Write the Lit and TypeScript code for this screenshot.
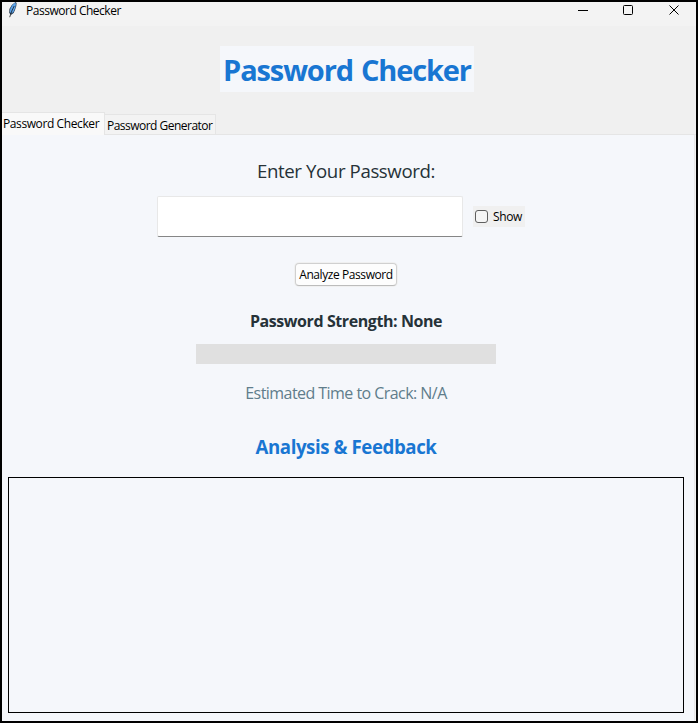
import { LitElement, html, css } from "lit";
import { customElement, state } from "lit/decorators.js";

@customElement("app-root")
export class AppRoot extends LitElement {
  @state() private shown = false;

  static styles = css`
    :host {
      display: block;
      font-family: "Open Sans", "Noto Sans", sans-serif;
      color: #000;
    }
    * {
      box-sizing: border-box;
    }
    .window {
      width: 698px;
      height: 723px;
      border: 2px solid #000;
      background: #f0f0f0;
      display: flex;
      flex-direction: column;
      overflow: hidden;
      white-space: nowrap;
    }
    .titlebar {
      height: 24px;
      flex: none;
      background: #f3f3f3;
      display: flex;
      align-items: flex-start;
      padding-left: 5px;
    }
    .feather {
      display: block;
      width: 13px;
      height: 18px;
      margin-right: 6px;
    }
    .caption {
      font-size: 12px;
      line-height: 18px;
      letter-spacing: -0.48px;
      flex: 1;
    }
    .controls {
      display: block;
      width: 118px;
      height: 18px;
    }
    .banner {
      height: 86px;
      flex: none;
      display: flex;
      justify-content: center;
      padding: 20px 4px 20px 0;
    }
    .title {
      margin: 0;
      width: 254px;
      height: 46px;
      background: #f5f7fb;
      color: #1976d2;
      font-size: 29px;
      font-weight: 700;
      line-height: 48px;
      text-align: center;
      letter-spacing: -1.12px;
      word-spacing: 1.5px;
    }
    .tabs {
      height: 23px;
      flex: none;
      display: flex;
      align-items: flex-end;
      border-bottom: 1px solid #e5e5e5;
      font-size: 12px;
    }
    .tab {
      border: 1px solid #e5e5e5;
      border-left: 0;
      border-bottom: 0;
      height: 20px;
      line-height: 22px;
      width: 111px;
      padding-left: 2px;
      background: #f3f3f3;
      letter-spacing: -0.52px;
    }
    .tab.active {
      height: 23px;
      line-height: 22px;
      width: 103px;
      padding-left: 1px;
      margin-bottom: -1px;
      background: #f9f9f9;
      letter-spacing: -0.4px;
    }
    .page {
      flex: 1;
      margin-right: 1px;
      border-right: 1px solid #e8e8e8;
      background: #f5f7fb;
      display: flex;
      flex-direction: column;
      align-items: center;
      padding: 23px 10px 8px 6px;
    }
    .prompt {
      height: 26px;
      line-height: 26px;
      font-size: 18.67px;
      color: #263238;
      letter-spacing: -0.4px;
    }
    .entry {
      display: flex;
      align-items: center;
      margin-top: 12px;
      margin-right: 10px;
      gap: 10px;
    }
    .field {
      width: 306px;
      height: 41px;
      border: 1px solid #e8e8e8;
      border-bottom-color: #868686;
      border-radius: 2px;
      background: #fff;
      padding: 0 6px;
      outline: none;
      font: inherit;
    }
    .show {
      width: 52px;
      height: 21px;
      background: #f0f0f0;
      display: flex;
      align-items: center;
      padding-left: 2px;
      gap: 5px;
      font-size: 12px;
      letter-spacing: -0.35px;
    }
    .box {
      appearance: none;
      margin: 0;
      width: 13px;
      height: 13px;
      border: 1px solid #5f5f5f;
      border-radius: 3px;
      background: #f5f5f5;
    }
    .analyze {
      margin-top: 26px;
      width: 102px;
      height: 23px;
      border: 1px solid #d0d0d0;
      border-bottom-color: #bcbcbc;
      border-radius: 4px;
      background: #fdfdfd;
      box-shadow: 0 0 0 1px #f0f0f0;
      color: #000;
      padding: 0;
      font: 12px/21px "Open Sans", "Noto Sans", sans-serif;
      letter-spacing: -0.42px;
    }
    .strength {
      margin-top: 24px;
      height: 22px;
      line-height: 23px;
      font-size: 16px;
      font-weight: 700;
      color: #263238;
      letter-spacing: -0.42px;
    }
    .meter {
      margin-top: 12px;
      width: 300px;
      height: 20px;
      background: #e0e0e0;
    }
    .crack {
      margin-top: 18px;
      height: 22px;
      line-height: 23px;
      font-size: 16px;
      color: #607d8b;
      letter-spacing: -0.55px;
    }
    .heading {
      margin: 30px 0 0;
      height: 26px;
      line-height: 26px;
      font-size: 18.67px;
      font-weight: 700;
      color: #1976d2;
      letter-spacing: -0.42px;
    }
    .feedback {
      margin-top: 17px;
      width: 676px;
      flex: 1;
      border: 1px solid #000;
    }
  `;

  render() {
    return html`
      <div class="window">
        <header class="titlebar">
          <svg class="feather" viewBox="0 0 13 18">
            <path d="M8.6 0 L9.6 1 L9.3 4 L8 8 L6.6 11 L4.2 12.8 L2.2 11 L2.4 7 L4.8 3 Z" fill="#24364c" />
            <path d="M8 0.6 L9 1.8 L8.2 6 L6.6 9.8 L4.6 11.6 L2.9 10.2 L3.2 7 L5.2 3.2 Z" fill="#5ba3ea" />
            <path d="M7.2 4 L4.8 9 L2.7 15.2" fill="none" stroke="#16191d" stroke-width="0.8" />
          </svg>
          <span class="caption">Password Checker</span>
          <svg class="controls" viewBox="0 0 118 18" fill="none" stroke="#000">
            <path d="M0 8.5H10" />
            <rect x="45.5" y="3.5" width="9" height="9" rx="1" />
            <path d="M91.5 3.5L100.5 12.5M100.5 3.5L91.5 12.5" />
          </svg>
        </header>
        <div class="banner"><h1 class="title">Password Checker</h1></div>
        <nav class="tabs">
          <div class="tab active">Password Checker</div>
          <div class="tab">Password Generator</div>
        </nav>
        <main class="page">
          <div class="prompt">Enter Your Password:</div>
          <div class="entry">
            <input class="field" type=${this.shown ? "text" : "password"} />
            <label class="show">
              <input
                class="box"
                type="checkbox"
                .checked=${this.shown}
                @change=${() => (this.shown = !this.shown)}
              /><span>Show</span>
            </label>
          </div>
          <button class="analyze">Analyze Password</button>
          <div class="strength">Password Strength: None</div>
          <div class="meter"></div>
          <div class="crack">Estimated Time to Crack: N/A</div>
          <h2 class="heading">Analysis &amp; Feedback</h2>
          <div class="feedback"></div>
        </main>
      </div>
    `;
  }
}
